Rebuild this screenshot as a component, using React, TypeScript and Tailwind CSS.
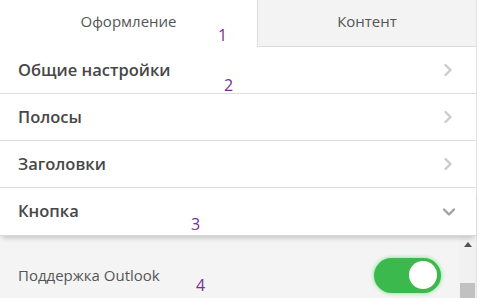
import { ChevronRight, ChevronDown } from "lucide-react";

const rows = ["Общие настройки", "Полосы", "Заголовки"];

function Mark({ n, className }: { n: string; className: string }) {
  return (
    <span
      className={`pointer-events-none absolute text-[16px] leading-none text-[#7a2d97] ${className}`}
    >
      {n}
    </span>
  );
}

export default function App() {
  return (
    <div className="relative h-[298px] w-[483px] overflow-hidden bg-white font-['Open_Sans',sans-serif]">
      <div className="flex h-full w-[477px] flex-col border-r border-[#e2e2e2]">
        <div className="flex h-[47px] shrink-0">
          <div className="flex w-[257px] items-center justify-center pb-1 text-[15px] text-[#555]">
            Оформление
          </div>
          <div className="flex flex-1 items-center justify-center border-b border-l border-[#dcdcdc] bg-[#f3f3f3] pb-1 text-[15px] text-[#555]">
            Контент
          </div>
        </div>

        {rows.map((r) => (
          <div
            key={r}
            className="flex h-[47px] shrink-0 items-center justify-between border-b border-[#dedede] pr-[18px] pl-[18px]"
          >
            <span className="text-[16.5px] font-semibold text-[#474747]">{r}</span>
            <ChevronRight className="h-[20px] w-[20px] text-[#cbcbcb]" strokeWidth={2.8} />
          </div>
        ))}

        <div className="relative z-10 flex h-[48px] shrink-0 items-center justify-between border-b border-[#d8d8d8] pr-[17px] pl-[18px] shadow-[0_4px_5px_-2px_rgba(0,0,0,0.2)]">
          <span className="text-[16.5px] font-semibold text-[#474747]">Кнопка</span>
          <ChevronDown className="h-[20px] w-[20px] text-[#a0a0a0]" strokeWidth={2.8} />
        </div>

        <div className="flex flex-1 bg-[#f4f4f4]">
          <div className="flex flex-1 items-center justify-between pt-[16px] pr-[18px] pl-[18px]">
            <span className="text-[15px] text-[#555]">Поддержка Outlook</span>
            <div className="flex h-[35px] w-[67px] items-center justify-end rounded-full bg-[#3cb94c] pr-[4px] shadow-[0_0_4px_rgba(60,220,80,0.7)]">
              <div className="h-[28px] w-[28px] rounded-full bg-white" />
            </div>
          </div>
          <div className="flex w-[17px] flex-col items-center bg-[#f1f1f1]">
            <div className="mt-[6px] h-0 w-0 border-x-[4px] border-b-[5px] border-x-transparent border-b-[#505050]" />
            <div className="mt-[36px] h-full w-[15px] bg-[#c1c1c1]" />
          </div>
        </div>
      </div>

      <Mark n="1" className="top-[27px] left-[218px]" />
      <Mark n="2" className="top-[77px] left-[224px]" />
      <Mark n="3" className="top-[216px] left-[191px]" />
      <Mark n="4" className="top-[277px] left-[196px]" />
    </div>
  );
}
